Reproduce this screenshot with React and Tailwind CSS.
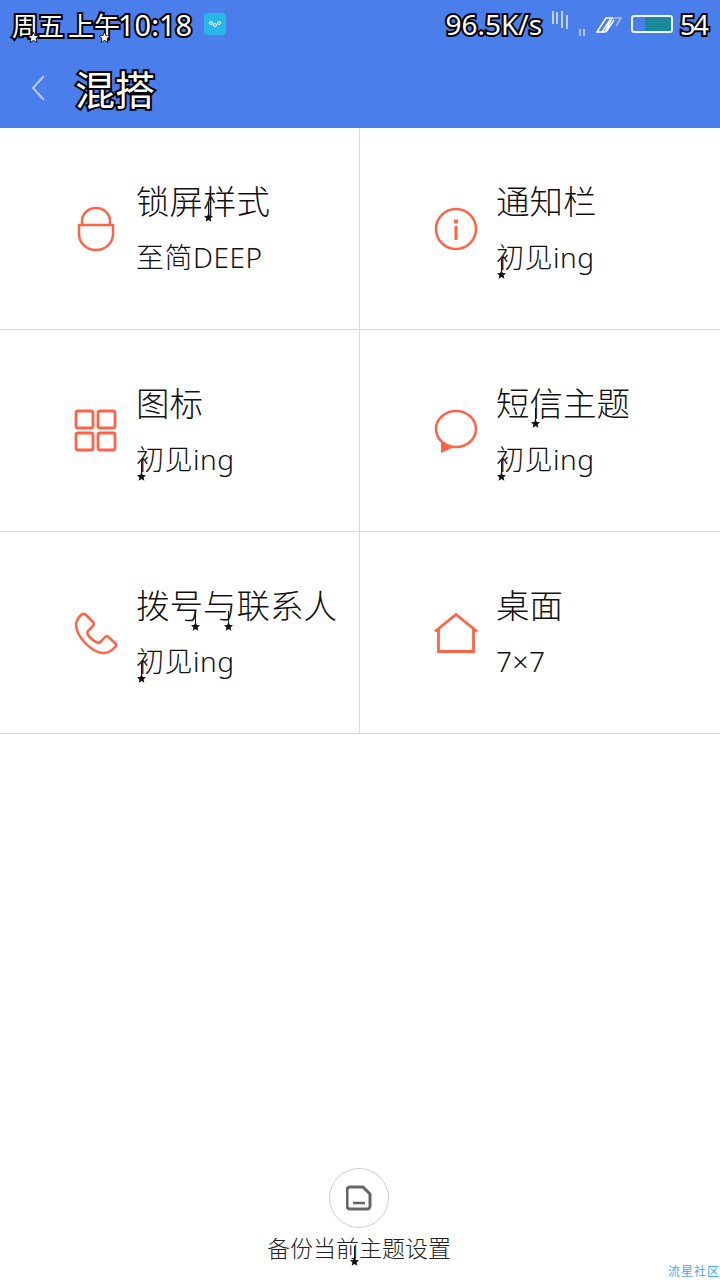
import React from "react";

const cjk = "font-['Noto_Sans_CJK_SC','Noto_Sans',sans-serif]";
const latinFirst = "font-['Noto_Sans','Noto_Sans_CJK_SC',sans-serif]";
const outline = "[-webkit-text-stroke:4px_#000] [paint-order:stroke_fill]";
const starPath = "M5 0l1.500 3.400 3.500.3-2.700 2.300.9 3.600L5 7.700 1.800 9.600l.9-3.600L0 3.700l3.500-.3z";

const Star = ({ className }) => (
  <span className={`absolute flex flex-col items-center ${className}`}>
    <span className="w-px h-[14px] bg-[#111]" />
    <svg width="9" height="9" viewBox="0 0 10 10" className="-mt-[3px]">
      <path d={starPath} fill="#111" />
    </svg>
  </span>
);

const StatusStar = ({ className }) => (
  <svg width="11" height="11" viewBox="-1 -1 12 12" className={`absolute ${className}`}>
    <path d={starPath} fill="#fff" stroke="#000" strokeWidth="1.500" paintOrder="stroke" />
  </svg>
);

const LockIcon = () => (
  <svg width="38" height="46" viewBox="0 0 38 46" fill="none" stroke="#ff6347" strokeWidth="2.500">
    <path d="M5 19v-4a14 13 0 0 1 28 0v4" />
    <path d="M2 19h34v9a17 16 0 0 1-34 0z" strokeLinejoin="round" />
  </svg>
);

const InfoIcon = () => (
  <svg width="44" height="44" viewBox="0 0 44 44" fill="none" stroke="#ff6347" strokeWidth="2.500">
    <circle cx="22" cy="22" r="20" />
    <path d="M22 19v14" strokeWidth="3" />
    <circle cx="22" cy="14.500" r="1" fill="#ff6347" />
  </svg>
);

const GridIcon = () => (
  <svg width="44" height="44" viewBox="0 0 44 44" fill="none" stroke="#ff6347" strokeWidth="2.800">
    <rect x="2" y="2" width="17" height="17" rx="2" />
    <rect x="24" y="2" width="17" height="17" rx="2" />
    <rect x="2" y="24" width="17" height="17" rx="2" />
    <rect x="24" y="24" width="17" height="17" rx="2" />
  </svg>
);

const ChatIcon = () => (
  <svg width="44" height="44" viewBox="0 0 44 44" fill="none" stroke="#ff6347" strokeWidth="2.500">
    <path d="M7 31l0 13 11-5z" fill="#ff6347" stroke="none" />
    <ellipse cx="22" cy="20" rx="20" ry="18" fill="#fff" />
  </svg>
);

const PhoneIcon = () => (
  <svg width="44" height="44" viewBox="0 0 44 44" fill="none" stroke="#ff6347" strokeWidth="2.500" strokeLinejoin="round">
    <path
      transform="translate(1 1)"
      d="M3 7C5 3 8 1 10 2L18 10C19.500 12 19 13 17.500 14.500L13 19C12 20 12 21 13 23C15 26 19 29 22 30.500C24 31 25 30.500 26 29.500L30 25C31 24 32 24 33 24.500L41 32C42 33 41 34 40 35C36 39.500 31 41.500 27 41C15 39 1 24 1 12C1 10 2 8.500 3 7z"
    />
  </svg>
);

const HomeIcon = () => (
  <svg width="44" height="40" viewBox="0 0 44 40" fill="none" stroke="#ff6347" strokeWidth="2.800">
    <path d="M1 18.500L22 1.500l21 17" />
    <path d="M4.500 15.500V38.500h35V15.500" />
  </svg>
);

const items = [
  { Icon: LockIcon, title: "锁屏样式", sub: "至简DEEP", stars: ["left-[68px] top-[26px]"] },
  { Icon: InfoIcon, title: "通知栏", sub: "初见ing", subStar: true },
  { Icon: GridIcon, title: "图标", sub: "初见ing", subStar: true },
  { Icon: ChatIcon, title: "短信主题", sub: "初见ing", subStar: true, stars: ["left-[35px] top-[30px]"] },
  { Icon: PhoneIcon, title: "拨号与联系人", sub: "初见ing", subStar: true, stars: ["left-[55px] top-[31px]", "left-[88px] top-[31px]"] },
  { Icon: HomeIcon, title: "桌面", sub: "7×7" },
];

const Cell = ({ item, index }) => {
  const { Icon, title, sub, stars = [], subStar } = item;
  return (
    <div className={`h-[202px] flex items-center pl-[72px] border-b border-[#d9d9d9] ${index % 2 === 0 ? "border-r" : ""}`}>
      <div className="w-[48px] flex justify-center shrink-0">
        <Icon />
      </div>
      <div className="ml-[16px] text-[#111]">
        <div className="relative text-[33.500px] leading-[48px] font-light whitespace-nowrap">
          {title}
          {stars.map((s) => <Star key={s} className={s} />)}
        </div>
        <div className={`relative mt-[9px] text-[28px] leading-[48px] font-light tracking-[0.5px] whitespace-nowrap ${latinFirst}`}>
          {sub}
          {subStar && <Star className="left-[1px] top-[26px]" />}
        </div>
      </div>
    </div>
  );
};

export default function App() {
  return (
    <div className={`relative w-[720px] h-[1280px] bg-white overflow-hidden flex flex-col ${cjk}`}>
      <header className="h-[128px] bg-[#4a7eea] shrink-0">
        <div className="h-[48px] flex items-center pl-[12px] pr-[13px] text-white">
          <span className={`relative text-[26px] leading-none whitespace-nowrap ${outline}`}>
            周五<span className="ml-[4px]">上午</span>
            <span className={`-ml-[2px] text-[29px] ${latinFirst} ${outline}`}>10:18</span>
            <StatusStar className="left-[16px] top-[22px]" />
            <StatusStar className="left-[87px] top-[22px]" />
          </span>
          <span className="ml-[12px] w-[22px] h-[22px] rounded-[3px] bg-[#2bb6e8] flex items-center justify-center">
            <svg width="12" height="8" viewBox="0 0 12 8" fill="none" stroke="#fff" strokeWidth="1">
              <circle cx="2" cy="3" r="1.500" />
              <circle cx="6" cy="5" r="1.500" />
              <circle cx="10" cy="3" r="1.500" />
            </svg>
          </span>
          <span className={`ml-auto text-[28px] leading-none whitespace-nowrap ${latinFirst} ${outline}`}>96.5K/s</span>
          <svg width="34" height="30" viewBox="0 0 34 30" className="ml-[10px] mt-[2px]" stroke="#fff" fill="none" strokeWidth="1.500">
            <path d="M1 1v13M5 2v12M10 1v17M15 5v14" opacity=".85" />
            <path d="M28 19v7M32 19v7" opacity=".7" />
          </svg>
          <svg width="26" height="16" viewBox="0 0 26 16" className="ml-[10px] mt-[1px]" fill="none" stroke="#fff" strokeWidth="1.500">
            <path d="M1 15L10 1h6l-7 14zM6 15L14 3M10 15L18 3" />
            <path d="M16 1h9l-5 8" opacity=".5" />
          </svg>
          <span className="relative ml-[9px] w-[42px] h-[18px] border-2 border-white/90 rounded-[3px] overflow-hidden">
            <span className="absolute right-0 top-0 bottom-0 w-[26px] bg-[#1a8a9a]" />
          </span>
          <span className={`ml-[7px] text-[27px] leading-none tracking-[-2px] ${latinFirst} ${outline}`}>54</span>
        </div>
        <div className="h-[80px] flex items-center pl-[31px]">
          <svg width="14" height="26" viewBox="0 0 14 26" fill="none" stroke="#fff" strokeOpacity=".6" strokeWidth="2">
            <path d="M13 1L2 13l11 12" />
          </svg>
          <h1 className={`ml-[30px] text-[40px] leading-none text-white ${outline}`}>混搭</h1>
        </div>
      </header>

      <main className="grid grid-cols-2 shrink-0">
        {items.map((item, i) => <Cell key={item.title} item={item} index={i} />)}
      </main>

      <footer className="mt-auto mb-[16px] flex flex-col items-center pr-[2px]">
        <div className="w-[60px] h-[60px] rounded-full border border-[#cfcfcf] flex items-center justify-center">
          <svg width="26" height="26" viewBox="0 0 26 26" fill="none" stroke="#666" strokeWidth="3" strokeLinejoin="round">
            <path d="M4 2h13l7 7v12a3 3 0 0 1-3 3H4a3 3 0 0 1-3-3V5a3 3 0 0 1 3-3z" />
            <path d="M7 18h12" strokeWidth="2.500" />
          </svg>
        </div>
        <div className="relative mt-[2px] text-[23px] leading-[34px] font-light text-[#222] whitespace-nowrap">
          备份当前主题设置
          <Star className="left-[83px] top-[16px]" />
        </div>
      </footer>

      <span className="absolute right-0 bottom-[2px] text-[12px] leading-[14px] tracking-[1px] text-[#45a8f0] whitespace-nowrap">流星社区</span>
    </div>
  );
}
